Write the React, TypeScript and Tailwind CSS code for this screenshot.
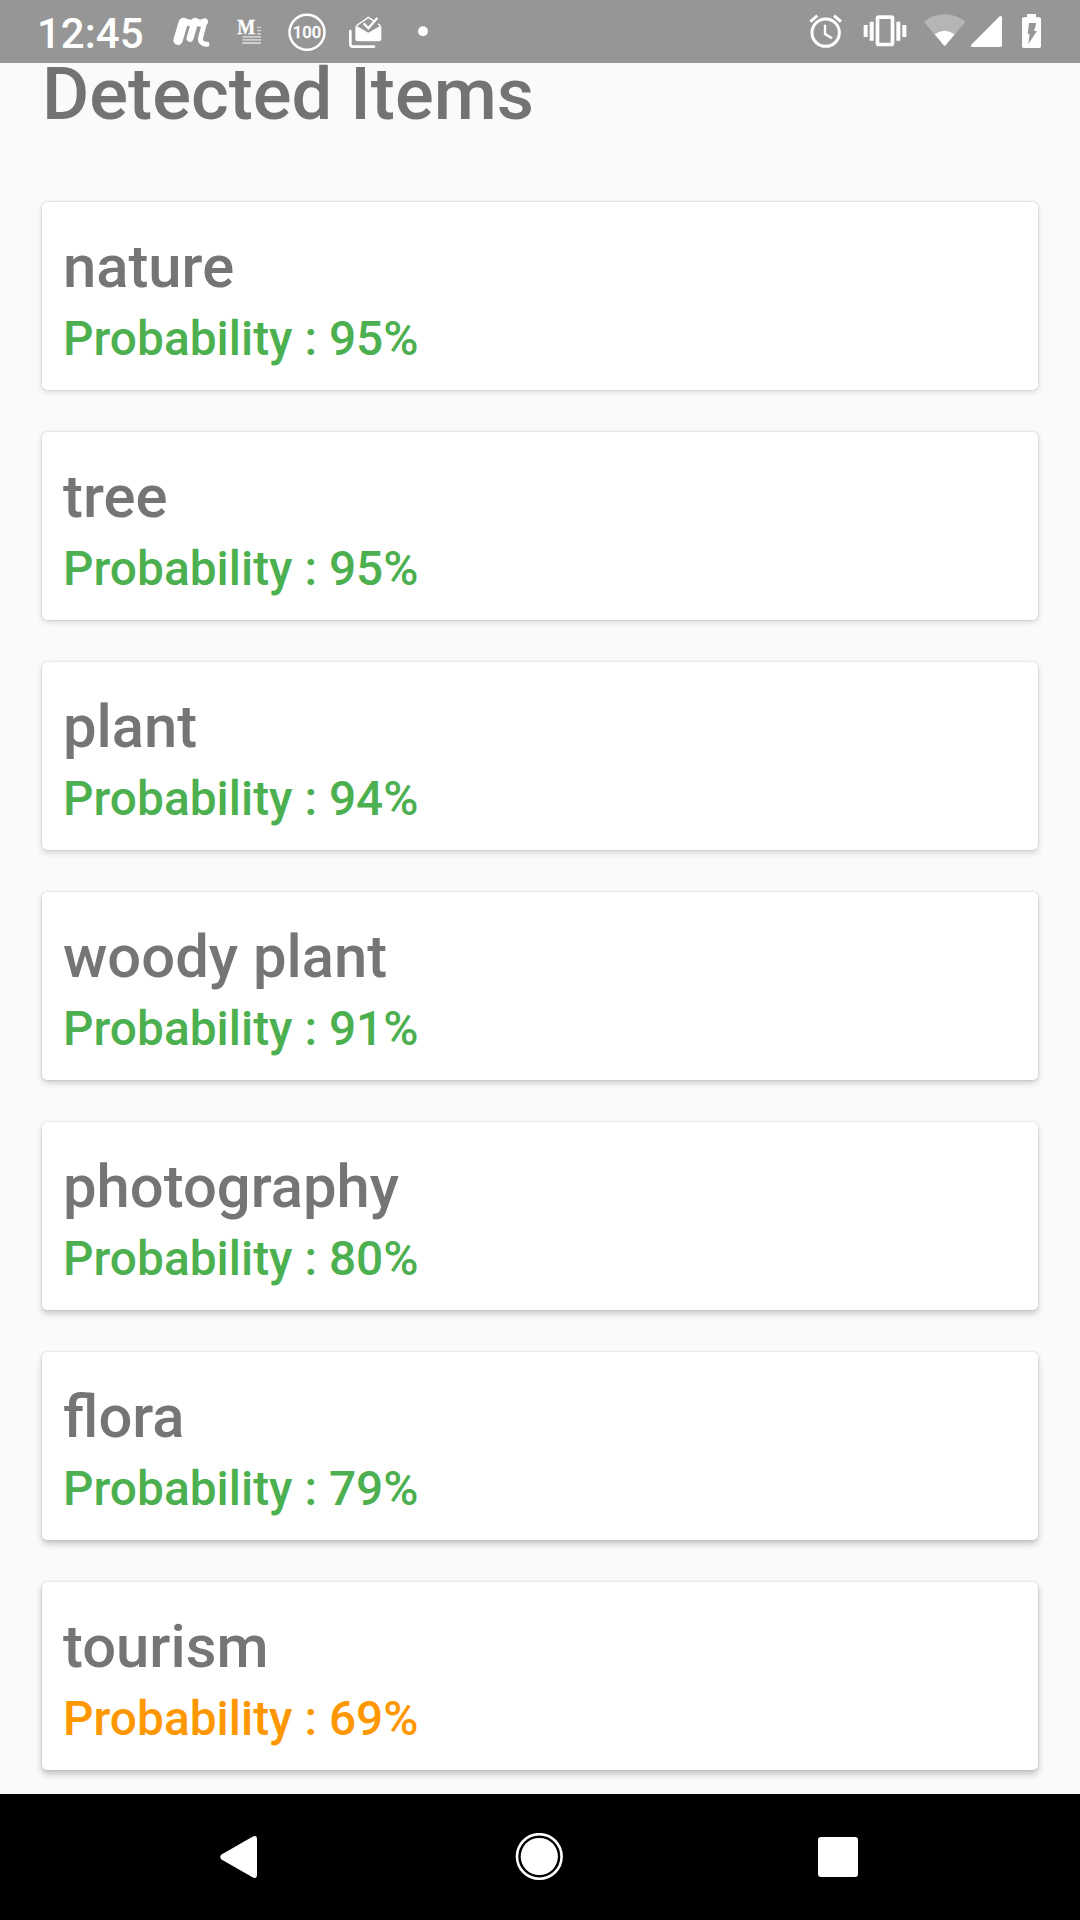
const items = [
  { name: "nature", probability: 95, tone: "text-[#4caf50]", shadow: "shadow-[0_2px_6px_rgba(0,0,0,0.12),0_0_2px_rgba(0,0,0,0.22)]" },
  { name: "tree", probability: 95, tone: "text-[#4caf50]", shadow: "shadow-[0_2px_6px_rgba(0,0,0,0.14),0_0_2px_rgba(0,0,0,0.22)]" },
  { name: "plant", probability: 94, tone: "text-[#4caf50]", shadow: "shadow-[0_3px_6px_rgba(0,0,0,0.15),0_0_2px_rgba(0,0,0,0.2)]" },
  { name: "woody plant", probability: 91, tone: "text-[#4caf50]", shadow: "shadow-[0_3px_6px_rgba(0,0,0,0.18),0_0_2px_rgba(0,0,0,0.2)]" },
  { name: "photography", probability: 80, tone: "text-[#4caf50]", shadow: "shadow-[0_4px_6px_rgba(0,0,0,0.19),0_0_2px_rgba(0,0,0,0.18)]" },
  { name: "flora", probability: 79, tone: "text-[#4caf50]", shadow: "shadow-[0_4px_6px_rgba(0,0,0,0.21),0_0_2px_rgba(0,0,0,0.18)]" },
  { name: "tourism", probability: 69, tone: "text-[#ff9800]", shadow: "shadow-[0_4px_7px_rgba(0,0,0,0.24),0_0_2px_rgba(0,0,0,0.16)]" },
];

function NotificationIcons() {
  return (
    <svg className="h-[63px] w-[280px] shrink-0" viewBox="0 0 840 189" fill="none" aria-hidden="true">
      <g stroke="#fff" strokeLinecap="round" strokeLinejoin="round">
        <path d="M70 67 L54 121" strokeWidth="28" />
        <path d="M105 64 L90 115" strokeWidth="21" />
        <path d="M134 68 L122 112 Q118 132 141 133" strokeWidth="15" />
        <path d="M74 66 L96 70 L106 64 L120 70 L134 65" strokeWidth="20" />
      </g>
      <g fill="#fff">
        <text x="232" y="103" fontFamily="Liberation Serif" fontSize="65" fontWeight="700" textLength="54" lengthAdjust="spacingAndGlyphs" stroke="#fff" strokeWidth="1">M</text>
        <path opacity=".55" d="M247 108h56v5h-56zM247 117h56v5h-56zM247 126h56v6h-56zM291 80h12v4h-12zM291 89h12v5h-12zM291 99h12v5h-12z" />
        <text x="441" y="113.500" textAnchor="middle" fontFamily="Roboto" fontSize="49" fontWeight="500" textLength="85" lengthAdjust="spacingAndGlyphs" stroke="#fff" strokeWidth=".8">100</text>
      </g>
      <circle cx="441" cy="96.500" r="52.500" stroke="#fff" strokeWidth="7.500" />
      <path d="M571 93v39q0 8 8 8h63" stroke="#fff" strokeWidth="8" strokeLinecap="round" />
      <path fill="#fff" d="M586 79v38q0 7 7 7h64q7 0 7-7V79l-38 23z" />
      <path d="M588 78l37-26 18 12M654 71l8 8M590 80l35 21 36-21" stroke="#fff" strokeWidth="4" />
      <path d="M611 70l14 15 27-31" stroke="#fff" strokeWidth="7" />
      <circle cx="789" cy="93.500" r="15" fill="#fff" />
    </svg>
  );
}

function SystemIcons() {
  return (
    <svg className="h-[63px] w-[290px] shrink-0" viewBox="0 0 870 189" fill="none" aria-hidden="true">
      <g stroke="#fff">
        <circle cx="107" cy="98" r="41" strokeWidth="9" />
        <path d="M61 65l21-18M153 65l-21-18" strokeWidth="9" />
        <path d="M105 74v28l21 13" strokeWidth="7" />
        <rect x="262.500" y="51.500" width="45" height="82" rx="4" strokeWidth="11" />
      </g>
      <path fill="#fff" d="M221 75h12v36h-12zM239 65h12v57h-12zM319 65h12v57h-12zM337 75h12v36h-12z" />
      <path fill="#fff" fillOpacity=".3" d="M404 68Q402 65 405 62Q463 24 523 62Q526 65 524 68L468 134Q464 140 460 134z" />
      <path fill="#fff" d="M434 103Q463 82 494 103L468 134Q464 140 460 134z" />
      <path fill="#fff" d="M546 141Q541 140 544 134L629 49Q636 45 636 53V136Q636 141 631 141z" />
      <path fill="#fff" fillRule="evenodd" d="M711 42h27v10h10q5 0 5 5v82q0 5-5 5h-47q-5 0-5-5V57q0-5 5-5h10zM717 69L713 102H719L715 132L741 93H732L739 69z" />
    </svg>
  );
}

export default function App() {
  return (
    <div className="flex h-[1920px] w-[1080px] flex-col overflow-hidden bg-[#fafafa] font-[Roboto,sans-serif] font-medium">
      <header className="flex h-[63px] shrink-0 justify-between bg-[#969696]">
        <div className="flex">
          <span className="w-[160px] shrink-0 pt-0.5 pl-[37px] text-[42px] leading-[63px] text-white">12:45</span>
          <NotificationIcons />
        </div>
        <SystemIcons />
      </header>
      <main className="flex h-[1731px] shrink-0 flex-col px-[42px]">
        <h1 className="h-[139px] pt-0.5 text-[72.400px] leading-[60px] text-[#737373]">Detected Items</h1>
        <ul className="flex flex-col gap-[42px]">
          {items.map((item) => (
            <li key={item.name} className={`h-[188px] rounded-[5px] bg-white px-[21px] pt-[31px] ${item.shadow}`}>
              <h2 className="text-[59.750px] leading-[68px] text-[#757575]">{item.name}</h2>
              <p className={`text-[47.850px] leading-[76px] ${item.tone}`}>Probability : {item.probability}%</p>
            </li>
          ))}
        </ul>
      </main>
      <nav className="flex h-[126px] shrink-0 items-center bg-black pl-[220px]">
        <button aria-label="Back">
          <svg className="h-[42px] w-[37px]" viewBox="0 0 37 42" fill="#fff"><path d="M32.500 .8Q37-1.500 37 3.500V38.500Q37 43.500 32.500 41.200L1.500 23.500Q-1 21 1.500 18.500z" /></svg>
        </button>
        <button aria-label="Home" className="ml-[258px]">
          <svg className="h-12 w-12" viewBox="0 0 48 48"><circle cx="24.300" cy="23.500" r="22.300" fill="none" stroke="#fff" strokeWidth="2.600" /><circle cx="24.300" cy="23.500" r="18.600" fill="#fff" /></svg>
        </button>
        <button aria-label="Recent apps" className="ml-[255px] size-10 rounded-[3px] bg-white" />
      </nav>
    </div>
  );
}
